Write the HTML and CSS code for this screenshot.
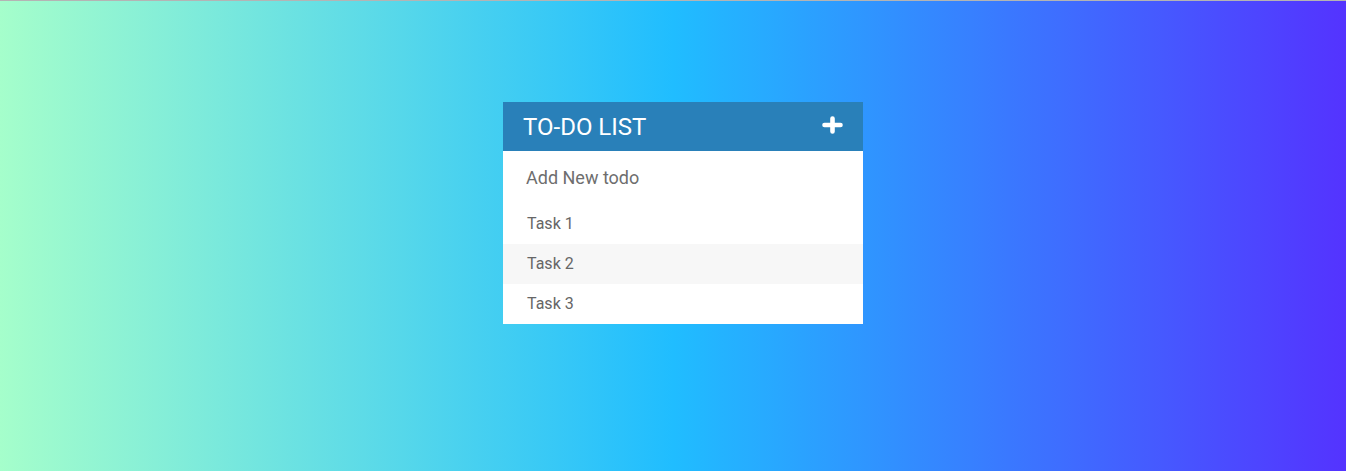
FILE: index.html
```html
<!DOCTYPE html>
<html>
<head>
<meta charset="utf-8">
<link rel="stylesheet" href="styles.css">
</head>
<body>
<div class="page">
  <div class="todo">
    <div class="todo-header">
      <h1 class="todo-title">TO-DO LIST</h1>
      <svg class="plus" width="21" height="18" viewBox="0 0 21 18">
        <path d="M10.5 2.5 V15.5 M2.5 9 H18.5" stroke="#fff" stroke-width="4.6" stroke-linecap="round" fill="none"/>
      </svg>
    </div>
    <input class="todo-input" type="text" placeholder="Add New todo">
    <ul class="todo-list">
      <li class="todo-item">Task 1</li>
      <li class="todo-item">Task 2</li>
      <li class="todo-item">Task 3</li>
    </ul>
  </div>
</div>
</body>
</html>
```

FILE: styles.css
```css
html, body {
  margin: 0;
  padding: 0;
  height: 100%;
}
body {
  font-family: Roboto, "Liberation Sans", sans-serif;
  border-top: 1px solid #b4b4b4;
  box-sizing: border-box;
  background: linear-gradient(to right, #a5fecb, #20bdff, #5433ff);
}
.page {
  padding-top: 101px;
}
.todo {
  width: 360px;
  margin-left: 503px;
  background: #fff;
}
.todo-header {
  height: 49px;
  background: #2980b9;
  display: flex;
  align-items: center;
  justify-content: space-between;
  padding: 0 20px 0 20px;
}
.todo-title {
  margin: 0;
  font-weight: 400;
  font-size: 24px;
  color: #fff;
  letter-spacing: 0;
}
.plus {
  display: block;
  margin-top: -4px;
}
.todo-input {
  display: block;
  width: 100%;
  box-sizing: border-box;
  height: 53px;
  border: none;
  outline: none;
  padding: 0 0 0 23px;
  font-family: Roboto, "Liberation Sans", sans-serif;
  font-size: 18px;
  color: #666;
  background: #fff;
}
.todo-input::placeholder {
  color: #6e6e6e;
}
.todo-list {
  list-style: none;
  margin: 0;
  padding: 0;
}
.todo-item {
  height: 40px;
  line-height: 40px;
  padding-left: 24px;
  font-size: 16px;
  color: #666;
  background: #fff;
}
.todo-item:nth-child(2) {
  background: #f7f7f7;
}
```
